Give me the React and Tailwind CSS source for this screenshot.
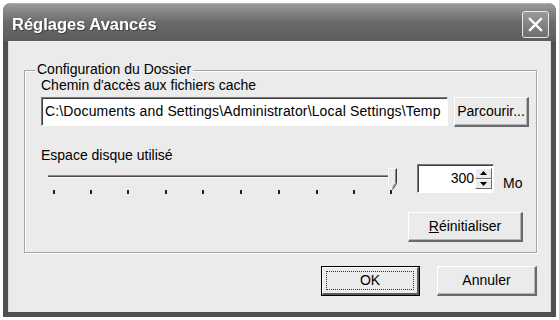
import React from 'react';

const font = { fontFamily: '"Liberation Sans", Arial, sans-serif' };

const ClassicButton = ({ children, className = '', isDefault = false }) => {
  if (isDefault) {
    return (
      <div className={`border border-black bg-[#ebebeb] ${className}`}>
        <div className="h-full w-full border-t border-l border-white border-r-2 border-b-2 border-r-[#5a5a5a] border-b-[#5a5a5a] p-[3px]">
          <div className="flex h-full w-full items-center justify-center border border-dotted border-[#333] text-[14px] text-black">
            {children}
          </div>
        </div>
      </div>
    );
  }
  return (
    <div
      className={`flex items-center justify-center bg-[#ebebeb] border-t border-l border-white border-r-2 border-b-2 border-r-[#6a6a6a] border-b-[#6a6a6a] shadow-[inset_-1px_-1px_0_#b5b5b5] text-[14px] text-black ${className}`}
    >
      {children}
    </div>
  );
};

const Slider = () => {
  const ticks = [52, 89, 126, 164, 201, 239, 277, 315, 352, 389];
  return (
    <svg width="360" height="30" viewBox="0 0 360 30" className="block">
      {/* track */}
      <rect x="7" y="11" width="348" height="1" fill="#8a8a8a" />
      <rect x="7" y="12" width="348" height="1" fill="#4a4a4a" />
      <rect x="7" y="13" width="348" height="1" fill="#ffffff" />
      {/* ticks */}
      {ticks.map((t) => (
        <rect key={t} x={t - 40} y="26" width="2" height="4" fill="#222" />
      ))}
      {/* thumb */}
      <path d="M347.5 4.5 H355.5 V19.5 L351.5 25.5 L347.5 19.5 Z" fill="#ebebeb" stroke="none" />
      <path d="M347.5 19.5 V4.5 H355" fill="none" stroke="#ffffff" strokeWidth="1" />
      <path d="M355.5 4.5 V19.5 L351.5 25.5" fill="none" stroke="#3a3a3a" strokeWidth="1" />
      <path d="M354.5 5.5 V19 L351.5 23.5" fill="none" stroke="#8a8a8a" strokeWidth="1" />
      <path d="M347.5 19.5 L350.5 24" fill="none" stroke="#ffffff" strokeWidth="1" />
    </svg>
  );
};

const SpinBox = () => (
  <div className="flex h-[29px] w-[77px] border-t border-l border-[#7a7a7a] border-b border-r border-b-white border-r-white shadow-[inset_1px_1px_0_#404040] bg-white">
    <div className="flex flex-1 items-center justify-end pr-[1px] text-[14px] text-black">300</div>
    <div className="flex w-[18px] flex-col py-[3px] pr-[1px]">
      <div className="flex flex-1 items-center justify-center bg-[#ebebeb] border-t border-l border-white border-r border-b border-r-[#6a6a6a] border-b-[#6a6a6a]">
        <svg width="7" height="4" viewBox="0 0 7 4"><path d="M3.5 0 L7 4 H0 Z" fill="#000" /></svg>
      </div>
      <div className="flex flex-1 items-center justify-center bg-[#ebebeb] border-t border-l border-white border-r border-b border-r-[#6a6a6a] border-b-[#6a6a6a]">
        <svg width="7" height="4" viewBox="0 0 7 4"><path d="M0 0 H7 L3.5 4 Z" fill="#000" /></svg>
      </div>
    </div>
  </div>
);

export default function App() {
  return (
    <div className="h-[320px] w-[559px] bg-white pt-[3px] pl-[3px] overflow-hidden" style={font}>
      <div className="flex h-[314px] w-[553px] flex-col overflow-hidden rounded-t-[8px] bg-[#4f4f4f]">
        {/* Title bar */}
        <div className="flex h-[38px] items-center justify-between bg-gradient-to-b from-[#9a9a9a] via-[#6a6a6a] to-[#5c5c5c] pl-[9px] pr-[7px] pt-[3px] border-t border-[#b0b0b0]">
          <span className="text-[16.5px] font-bold text-white drop-shadow-[1px_1px_0_rgba(0,0,0,0.35)]">
            Réglages Avancés
          </span>
          <div className="flex h-[27px] w-[27px] items-center justify-center rounded-[3px] border border-[#e8e8e8] bg-gradient-to-b from-[#9a9a9a] to-[#6e6e6e]">
            <svg width="15" height="15" viewBox="0 0 15 15">
              <path d="M2 2 L13 13 M13 2 L2 13" stroke="#fff" strokeWidth="2.4" strokeLinecap="square" />
            </svg>
          </div>
        </div>

        {/* Body */}
        <div className="mx-[5px] mb-[5px] flex flex-1 flex-col bg-[#ebebeb] border-l border-r border-[#d9d9d9] pt-[29px] pl-[15px] pr-[13px]">
          {/* Group box */}
          <div className="relative border border-[#a5a5a5] shadow-[1px_1px_0_#ffffff,inset_1px_1px_0_#ffffff] pl-[16px] pt-[7px] pb-[10px]">
            <span className="absolute left-[10px] top-[-9px] bg-[#ebebeb] px-[2px] text-[14px] leading-[14px] text-black">
              Configuration du Dossier
            </span>
            <div className="text-[14px] leading-[14px] text-black">Chemin d'accès aux fichiers cache</div>
            <div className="mt-[5px] flex items-start gap-[6px]">
              <div className="flex h-[29px] w-[407px] items-center bg-white pl-[3px] text-[14px] tracking-[0.15px] text-black whitespace-nowrap overflow-hidden border-t border-l border-[#7a7a7a] border-b border-r border-b-white border-r-white shadow-[inset_1px_1px_0_#404040]">
                C:\Documents and Settings\Administrator\Local Settings\Temp
              </div>
              <ClassicButton className="h-[30px] w-[75px]">Parcourir...</ClassicButton>
            </div>
            <div className="mt-[21px] text-[14px] leading-[14px] text-black">Espace disque utilisé</div>
            <div className="mt-[2px] flex h-[30px] items-start">
              <Slider />
              <div className="ml-[16px]">
                <SpinBox />
              </div>
              <span className="ml-[9px] mt-[12px] text-[14px] leading-[14px] text-black">Mo</span>
            </div>
            <div className="mt-[18px] flex justify-end pr-[13px]">
              <ClassicButton className="h-[30px] w-[115px]">
                <span><span className="underline">R</span>éinitialiser</span>
              </ClassicButton>
            </div>
          </div>

          {/* Dialog buttons */}
          <div className="mt-[13px] flex justify-end gap-[17px]">
            <ClassicButton isDefault className="h-[30px] w-[99px]">OK</ClassicButton>
            <ClassicButton className="h-[30px] w-[100px]">Annuler</ClassicButton>
          </div>
        </div>
      </div>
    </div>
  );
}
